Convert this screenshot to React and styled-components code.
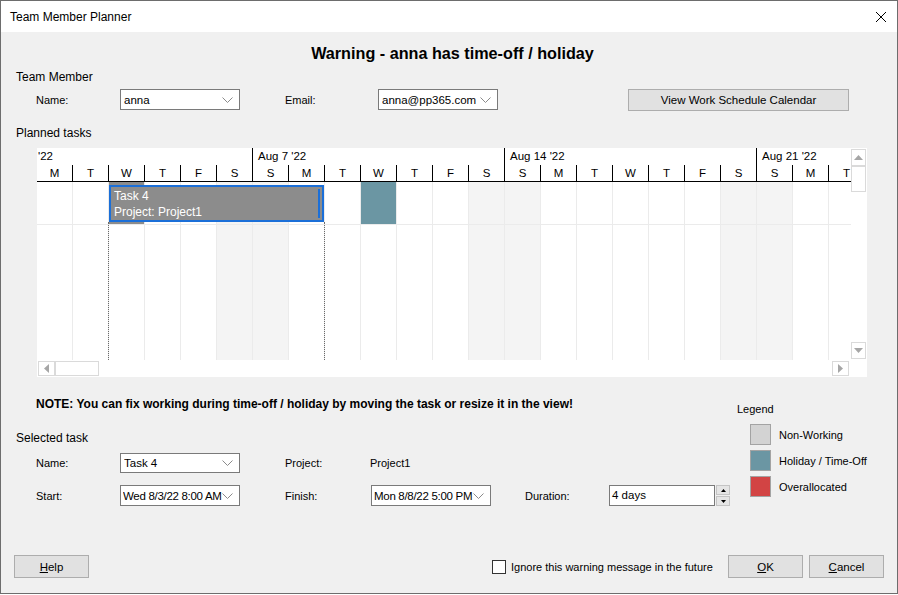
import styled, { createGlobalStyle } from "styled-components";

const GlobalStyle = createGlobalStyle`
  html, body { margin: 0; padding: 0; background: #fff; }
  body {
    font-family: "Liberation Sans", Arial, sans-serif;
    font-size: 11px;
    color: #000;
  }
  * { box-sizing: border-box; }
`;

const days = ["M","T","W","T","F","S","S","M","T","W","T","F","S","S","M","T","W","T","F","S","S","M","T"];
const weekends = [5, 6, 12, 13, 19, 20];
const weeks = [
  { label: "'22", cols: 6, pad: 1 },
  { label: "Aug 7 '22", cols: 7, pad: 5 },
  { label: "Aug 14 '22", cols: 7, pad: 5 },
  { label: "Aug 21 '22", cols: 7, pad: 5 },
];

function Chevron() {
  return (
    <svg width="11" height="6" viewBox="0 0 11 6">
      <polyline points="0.5,0.5 5.5,5.5 10.5,0.5" fill="none" stroke="#8a8a8a" strokeWidth="1" />
    </svg>
  );
}

function Tri({ dir, color = "#a6a6a6", size = 5 }) {
  const w = size * 2 - 1;
  const pts = {
    up: `0,${size} ${w / 2},0 ${w},${size}`,
    down: `0,0 ${w / 2},${size} ${w},0`,
    left: `${size},0 0,${w / 2} ${size},${w}`,
    right: `0,0 ${size},${w / 2} 0,${w}`,
  }[dir];
  const vert = dir === "up" || dir === "down";
  return (
    <svg width={vert ? w : size} height={vert ? size : w}>
      <polygon points={pts} fill={color} />
    </svg>
  );
}

function App() {
  return (
    <>
      <GlobalStyle />
      <Window>
        <TitleBar>
          <span>Team Member Planner</span>
          <svg width="10" height="10" viewBox="0 0 10 10">
            <line x1="0" y1="0" x2="10" y2="10" stroke="#000" strokeWidth="1" />
            <line x1="10" y1="0" x2="0" y2="10" stroke="#000" strokeWidth="1" />
          </svg>
        </TitleBar>
        <Body>
          <Heading>Warning - anna has time-off / holiday</Heading>

          <GroupLabel $mt={7}>Team Member</GroupLabel>
          <FieldRow $mt={4} $h={23}>
            <FieldLabel $w={84}>Name:</FieldLabel>
            <Combo $h={21}><ComboText>anna</ComboText><ComboArrow><Chevron /></ComboArrow></Combo>
            <Gap $w={45} />
            <FieldLabel $w={93}>Email:</FieldLabel>
            <Combo $h={21}><ComboText>anna@pp365.com</ComboText><ComboArrow><Chevron /></ComboArrow></Combo>
            <Gap $w={130} />
            <Button $w={221} $h={22}>View Work Schedule Calendar</Button>
          </FieldRow>

          <GroupLabel $mt={15}>Planned tasks</GroupLabel>
          <Gantt>
            <GanttTop>
              <Chart>
                <DateRow>
                  {weeks.map((w, i) => (
                    <WeekBlock key={i} $w={w.cols * 36} $pad={w.pad}>{w.label}</WeekBlock>
                  ))}
                </DateRow>
                <DayColumns>
                  {days.map((d, i) => {
                    const we = weekends.includes(i);
                    let first = we ? "#f4f4f4" : "#fff";
                    if (i === 2) first = "#8c8c8c";
                    if (i === 9) first = "#6b96a3";
                    return (
                      <DayColumn key={i}>
                        <DayHead>{d}</DayHead>
                        <RowCell $bg={first} />
                        <RestCell $bg={we ? "#f4f4f4" : "#fff"} />
                      </DayColumn>
                    );
                  })}
                </DayColumns>
                <TaskBar>
                  <div>Task 4</div>
                  <div>Project: Project1</div>
                  <ResizeHandle />
                </TaskBar>
                <DottedLine $left={71} />
                <DottedLine $left={287} />
              </Chart>
              <VScroll>
                <ScrollBtn $w={15} $h={17}><Tri dir="up" /></ScrollBtn>
                <ScrollThumb $w={15} $h={26} />
                <Spacer />
                <ScrollBtn $w={15} $h={17}><Tri dir="down" /></ScrollBtn>
              </VScroll>
            </GanttTop>
            <HScroll>
              <ScrollBtn $w={17} $h={15}><Tri dir="left" /></ScrollBtn>
              <ScrollThumb $w={44} $h={15} />
              <Spacer />
              <ScrollBtn $w={17} $h={15}><Tri dir="right" /></ScrollBtn>
            </HScroll>
          </Gantt>

          <Lower>
            <LeftCol>
              <Note>NOTE: You can fix working during time-off / holiday by moving the task or resize it in the view!</Note>
              <GroupLabel $mt={20}>Selected task</GroupLabel>
              <FieldRow $mt={8} $h={20}>
                <FieldLabel $w={84}>Name:</FieldLabel>
                <Combo $h={20}><ComboText>Task 4</ComboText><ComboArrow><Chevron /></ComboArrow></Combo>
                <Gap $w={45} />
                <FieldLabel $w={85}>Project:</FieldLabel>
                <span>Project1</span>
              </FieldRow>
              <FieldRow $mt={12} $h={21}>
                <FieldLabel $w={84}>Start:</FieldLabel>
                <Combo $h={21} $pad={2} $tight><ComboText>Wed 8/3/22 8:00 AM</ComboText><ComboArrow><Chevron /></ComboArrow></Combo>
                <Gap $w={45} />
                <FieldLabel $w={86}>Finish:</FieldLabel>
                <Combo $h={21} $pad={2} $tight><ComboText>Mon 8/8/22 5:00 PM</ComboText><ComboArrow><Chevron /></ComboArrow></Combo>
                <Gap $w={34} />
                <FieldLabel $w={84}>Duration:</FieldLabel>
                <TextInput>4 days</TextInput>
                <Spin>
                  <SpinBtn><Tri dir="up" color="#000" size={3} /></SpinBtn>
                  <SpinBtn><Tri dir="down" color="#000" size={3} /></SpinBtn>
                </Spin>
              </FieldRow>
            </LeftCol>
            <Legend>
              <LegendTitle>Legend</LegendTitle>
              <LegendList>
                <LegendItem><Swatch $c="#d3d3d3" />Non-Working</LegendItem>
                <LegendItem><Swatch $c="#6b96a3" />Holiday / Time-Off</LegendItem>
                <LegendItem><Swatch $c="#d24444" />Overallocated</LegendItem>
              </LegendList>
            </Legend>
          </Lower>

          <BottomBar>
            <Button $w={75} $h={23}><u>H</u>elp</Button>
            <Spacer />
            <CheckGroup>
              <CheckBox />
              <CheckLabel>Ignore this warning message in the future</CheckLabel>
            </CheckGroup>
            <Button $w={75} $h={23}><u>O</u>K</Button>
            <Gap $w={6} />
            <Button $w={75} $h={23}><u>C</u>ancel</Button>
          </BottomBar>
        </Body>
      </Window>
    </>
  );
}

const Window = styled.div`
  width: 898px;
  height: 594px;
  border: 1px solid #6d6d6d;
  display: flex;
  flex-direction: column;
  background: #f0f0f0;
`;

const TitleBar = styled.div`
  height: 31px;
  flex-shrink: 0;
  background: #fff;
  display: flex;
  align-items: center;
  justify-content: space-between;
  padding: 0 11px 0 9px;
  font-size: 12px;
`;

const Body = styled.div`
  flex: 1;
  display: flex;
  flex-direction: column;
  padding: 0 13px 15px 13px;
`;

const Heading = styled.div`
  margin-top: 11px;
  padding-left: 7px;
  line-height: 20px;
  font-size: 16.2px;
  font-weight: bold;
  text-align: center;
`;

const GroupLabel = styled.div`
  margin: ${p => p.$mt}px 0 0 2px;
  line-height: 14px;
  font-size: 12px;
`;

const FieldRow = styled.div`
  display: flex;
  align-items: center;
  margin-top: ${p => p.$mt}px;
  height: ${p => p.$h}px;
  padding-left: 22px;
`;

const FieldLabel = styled.span`
  width: ${p => p.$w}px;
  flex-shrink: 0;
`;

const Gap = styled.div`
  width: ${p => p.$w}px;
  flex-shrink: 0;
`;

const Spacer = styled.div`
  flex: 1;
`;

const Combo = styled.div`
  width: 120px;
  height: ${p => p.$h}px;
  flex-shrink: 0;
  background: #fff;
  border: 1px solid #7a7a7a;
  display: flex;
  align-items: center;
  padding-left: ${p => p.$pad ?? 3}px;
  font-size: 11.5px;
  letter-spacing: ${p => (p.$tight ? "-0.3px" : "normal")};
`;

const ComboText = styled.span`
  flex: 1;
  overflow: hidden;
  white-space: nowrap;
`;

const ComboArrow = styled.div`
  width: 17px;
  height: 100%;
  flex-shrink: 0;
  background: #fff;
  display: flex;
  align-items: center;
  justify-content: flex-start;
`;

const Button = styled.div`
  width: ${p => p.$w}px;
  height: ${p => p.$h}px;
  flex-shrink: 0;
  background: #e1e1e1;
  border: 1px solid #adadad;
  display: flex;
  align-items: center;
  justify-content: center;
  font-size: 11.5px;
`;

const Gantt = styled.div`
  margin: 8px 0 0 23px;
  width: 830px;
  height: 229px;
  background: #fff;
  display: flex;
  flex-direction: column;
`;

const GanttTop = styled.div`
  display: flex;
  height: 212px;
`;

const Chart = styled.div`
  position: relative;
  width: 814px;
  height: 212px;
  overflow: hidden;
  display: flex;
  flex-direction: column;
  font-size: 11.5px;
`;

const DateRow = styled.div`
  display: flex;
  height: 17px;
  flex-shrink: 0;
`;

const WeekBlock = styled.div`
  width: ${p => p.$w}px;
  flex-shrink: 0;
  border-right: 1px solid #000;
  padding-left: ${p => p.$pad}px;
  line-height: 17px;
  white-space: nowrap;
`;

const DayColumns = styled.div`
  display: flex;
  flex: 1;
`;

const DayColumn = styled.div`
  width: 36px;
  flex-shrink: 0;
  display: flex;
  flex-direction: column;
`;

const DayHead = styled.div`
  height: 17px;
  border-right: 1px solid #000;
  border-bottom: 1px solid #000;
  text-align: center;
  line-height: 16px;
`;

const RowCell = styled.div`
  height: 43px;
  background: ${p => p.$bg};
  border-right: 1px solid #ebebeb;
  border-bottom: 1px solid #ebebeb;
`;

const RestCell = styled.div`
  flex: 1;
  background: ${p => p.$bg};
  border-right: 1px solid #ebebeb;
`;

const TaskBar = styled.div`
  position: absolute;
  left: 72px;
  top: 37px;
  width: 215px;
  height: 37px;
  background: #8c8c8c;
  border: 2px solid #1b6fd8;
  color: #fff;
  padding: 1px 0 0 3px;
  line-height: 16px;
  font-size: 12px;
`;

const ResizeHandle = styled.div`
  position: absolute;
  right: 2px;
  top: 2px;
  bottom: 2px;
  width: 2px;
  background: #1b6fd8;
`;

const DottedLine = styled.div`
  position: absolute;
  left: ${p => p.$left}px;
  top: 74px;
  bottom: 0;
  border-left: 1px dotted #6a6a6a;
`;

const VScroll = styled.div`
  width: 16px;
  display: flex;
  flex-direction: column;
  padding: 1px 0 1px 0;
`;

const HScroll = styled.div`
  width: 814px;
  height: 17px;
  display: flex;
  padding: 1px 2px 1px 1px;
`;

const ScrollBtn = styled.div`
  width: ${p => p.$w}px;
  height: ${p => p.$h}px;
  flex-shrink: 0;
  border: 1px solid #dadada;
  display: flex;
  align-items: center;
  justify-content: center;
`;

const ScrollThumb = styled.div`
  width: ${p => p.$w}px;
  height: ${p => p.$h}px;
  flex-shrink: 0;
  border: 1px solid #dadada;
`;

const Lower = styled.div`
  display: flex;
  margin-top: 20px;
`;

const LeftCol = styled.div`
  width: 723px;
  flex-shrink: 0;
  display: flex;
  flex-direction: column;
`;

const Note = styled.div`
  margin-left: 22px;
  line-height: 14px;
  font-size: 12px;
  font-weight: bold;
  white-space: nowrap;
`;

const TextInput = styled.div`
  width: 106px;
  height: 21px;
  background: #fff;
  border: 1px solid #7a7a7a;
  padding-left: 2px;
  line-height: 19px;
  font-size: 11.5px;
`;

const Spin = styled.div`
  margin-left: 1px;
  display: flex;
  flex-direction: column;
  gap: 1px;
`;

const SpinBtn = styled.div`
  width: 14px;
  height: 10px;
  background: #e5e5e5;
  border: 1px solid #c4c4c4;
  display: flex;
  align-items: center;
  justify-content: center;
`;

const Legend = styled.div`
  padding-top: 5px;
`;

const LegendTitle = styled.div`
  line-height: 14px;
`;

const LegendList = styled.div`
  margin: 8px 0 0 13px;
  display: flex;
  flex-direction: column;
  gap: 5px;
`;

const LegendItem = styled.div`
  display: flex;
  align-items: center;
  height: 21px;
  gap: 8px;
`;

const Swatch = styled.div`
  width: 21px;
  height: 21px;
  background: ${p => p.$c};
  border: 1px solid #a3a3a3;
`;

const BottomBar = styled.div`
  margin-top: auto;
  display: flex;
  align-items: center;
  height: 23px;
`;

const CheckGroup = styled.div`
  width: 236px;
  display: flex;
  align-items: center;
  gap: 5px;
`;

const CheckBox = styled.div`
  width: 14px;
  height: 14px;
  flex-shrink: 0;
  border: 1px solid #333;
  background: #fff;
`;

const CheckLabel = styled.span`
  white-space: nowrap;
`;

export default App;
